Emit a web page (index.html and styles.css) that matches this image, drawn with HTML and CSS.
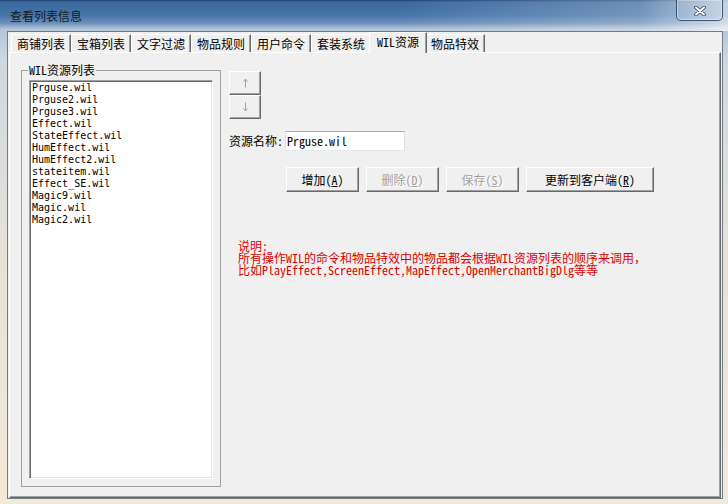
FILE: index.html
```html
<!DOCTYPE html>
<html lang="zh-CN">
<head>
<meta charset="utf-8">
<title>查看列表信息</title>
<link rel="stylesheet" href="styles.css">
</head>
<body>
<div class="window">
  <div class="titlebar">
    <span class="title">查看列表信息</span>
    <div class="close">
      <svg width="12" height="10" viewBox="0 0 12 10">
        <path d="M2 1.5l8 7M10 1.5l-8 7" stroke="#2a3c52" stroke-width="3.6" stroke-linecap="round"/>
        <path d="M2 1.5l8 7M10 1.5l-8 7" stroke="#ffffff" stroke-width="2" stroke-linecap="round"/>
      </svg>
    </div>
  </div>
  <div class="client">
    <div class="tabs">
      <div class="tab">商铺列表</div>
      <div class="tab">宝箱列表</div>
      <div class="tab">文字过滤</div>
      <div class="tab">物品规则</div>
      <div class="tab">用户命令</div>
      <div class="tab">套装系统</div>
      <div class="tab active">WIL资源</div>
      <div class="tab">物品特效</div>
    </div>
    <div class="panel">
      <fieldset class="group">
        <legend>WIL资源列表</legend>
        <div class="listbox">
          <div class="item">Prguse.wil</div>
          <div class="item">Prguse2.wil</div>
          <div class="item">Prguse3.wil</div>
          <div class="item">Effect.wil</div>
          <div class="item">StateEffect.wil</div>
          <div class="item">HumEffect.wil</div>
          <div class="item">HumEffect2.wil</div>
          <div class="item">stateitem.wil</div>
          <div class="item">Effect_SE.wil</div>
          <div class="item">Magic9.wil</div>
          <div class="item">Magic.wil</div>
          <div class="item">Magic2.wil</div>
        </div>
      </fieldset>
      <div class="side">
        <div class="arrows">
          <div class="abtn">
            <svg width="5" height="10" viewBox="0 0 5 10"><path d="M2.5 1.5V9.5M0.5 3.5L2.5 1 4.5 3.5" fill="none" stroke="#a0a0a0" stroke-width="1"/></svg>
          </div>
          <div class="abtn">
            <svg width="5" height="10" viewBox="0 0 5 10"><path d="M2.5 0.5V8.5M0.5 6.5L2.5 9 4.5 6.5" fill="none" stroke="#a0a0a0" stroke-width="1"/></svg>
          </div>
        </div>
        <div class="namerow">
          <span class="lbl">资源名称:</span>
          <div class="edit">Prguse.wil</div>
        </div>
        <div class="btnrow">
          <div class="btn">增加(<u>A</u>)</div>
          <div class="btn disabled">删除(<u>D</u>)</div>
          <div class="btn disabled">保存(<u>S</u>)</div>
          <div class="btn wide">更新到客户端(<u>R</u>)</div>
        </div>
        <div class="note">说明:<br>所有操作WIL的命令和物品特效中的物品都会根据WIL资源列表的顺序来调用，<br>比如PlayEffect,ScreenEffect,MapEffect,OpenMerchantBigDlg等等</div>
      </div>
    </div>
  </div>
</div>
</body>
</html>
```
FILE: styles.css
```css
* { box-sizing: border-box; }

body {
  margin: 0;
  width: 728px;
  height: 504px;
  overflow: hidden;
  background: #f3e9d8;
  font-family: "Noto Sans Mono CJK SC", "Noto Sans CJK SC", monospace;
  font-size: 12px;
  color: #000;
}

.window {
  height: 504px;
  padding: 0 5px 5px 7px;
  display: flex;
  flex-direction: column;
  background:
    linear-gradient(to right, rgba(255,255,255,0) 55%, rgba(255,255,255,0.25) 88%, rgba(255,255,255,0.7) 100%) 0 0 / 100% 31px no-repeat,
    linear-gradient(to bottom, #1d3f6e 0px, #3b699e 2px, #4574a8 15px, #6b8eb8 23px, #b3c5d9 29px, #cfd8e0 60px, #e6e2d8 250px, #f3e9d8 100%);
}

.titlebar {
  height: 31px;
  flex: none;
  display: flex;
  justify-content: space-between;
  align-items: flex-start;
  padding-left: 3px;
}

.title {
  font-family: "Noto Sans CJK SC", sans-serif;
  font-size: 12px;
  line-height: 12px;
  margin-top: 10px;
  color: #101a26;
}

.close {
  width: 47px;
  height: 21px;
  border: 1px solid rgba(30, 55, 90, 0.8);
  border-top: none;
  border-radius: 0 0 5px 5px;
  box-shadow: inset 0 0 0 1px rgba(255,255,255,0.4);
  background: linear-gradient(to bottom, rgba(255,255,255,0.12), rgba(255,255,255,0.04));
  display: flex;
  align-items: center;
  justify-content: center;
  padding-top: 2px;
}

.client {
  height: 468px;
  flex: none;
  border: 1px solid #6e7b88;
  background: #f0f0f0;
  padding: 0 1px;
  display: flex;
  flex-direction: column;
}

.tabs {
  height: 20px;
  flex: none;
  display: flex;
  align-items: flex-end;
  padding-left: 2px;
}

.tab {
  height: 18px;
  padding: 0 5px;
  border-top: 1px solid #fff;
  border-left: 1px solid #fff;
  border-right: 1px solid #696969;
  box-shadow: inset -1px 0 0 #a0a0a0;
  line-height: 17px;
  white-space: nowrap;
  background: #f0f0f0;
}

.tab.active {
  height: 21px;
  padding: 0 7px;
  margin: 0 -2px -1px;
  z-index: 1;
}

.panel {
  height: 446px;
  flex: none;
  border: 1px solid;
  border-color: #fff #696969 #696969 #fff;
  box-shadow: inset -1px -1px 0 #a0a0a0;
  display: flex;
  align-items: flex-start;
}

.group {
  margin: 11px 0 0 11px;
  padding: 4px 7px 7px 7px;
  width: 200px;
  min-width: 0;
  border: 1px solid #a0a0a0;
}

.group legend {
  padding: 0 1px;
  margin-left: -1px;
  line-height: 12px;
  font-size: 12px;
}

.listbox {
  width: 184px;
  height: 399px;
  background: #fff;
  border: 1px solid;
  border-color: #a0a0a0 #fff #fff #a0a0a0;
  box-shadow: inset 1px 1px 0 #696969, inset -1px -1px 0 #e3e3e3;
  padding: 1px 0 0 2px;
  font-family: "DejaVu Sans Mono", "Liberation Mono", monospace;
  font-size: 10px;
}

.item {
  height: 12px;
  line-height: 12px;
  white-space: pre;
}

.side {
  margin: 18px 0 0 8px;
}

.abtn {
  width: 32px;
  height: 24px;
  border: 1px solid;
  border-color: #fff #696969 #696969 #fff;
  box-shadow: inset -1px -1px 0 #a0a0a0;
  display: flex;
  align-items: center;
  justify-content: center;
}

.namerow {
  display: flex;
  align-items: center;
  margin-top: 12px;
}

.lbl {
  margin-right: 2px;
  line-height: 12px;
}

.edit {
  width: 120px;
  height: 20px;
  border: 1px solid;
  border-color: #abadb3 #dbdfe6 #e3e9ef #e2e3ea;
  background: #fff;
  padding-left: 1px;
  line-height: 18px;
}

.btnrow {
  display: flex;
  gap: 7px;
  margin: 16px 0 0 57px;
}

.btn {
  width: 73px;
  height: 25px;
  border: 1px solid;
  border-color: #fff #696969 #696969 #fff;
  box-shadow: inset -1px -1px 0 #a0a0a0;
  display: flex;
  align-items: center;
  justify-content: center;
  line-height: 12px;
  white-space: nowrap;
}

.btn.wide { width: 128px; }

.btn.disabled {
  color: #a0a0a0;
  text-shadow: 1px 1px 0 #fff;
}

.note {
  margin: 48px 0 0 9px;
  color: #dc0000;
  line-height: 12px;
  white-space: nowrap;
}
```
